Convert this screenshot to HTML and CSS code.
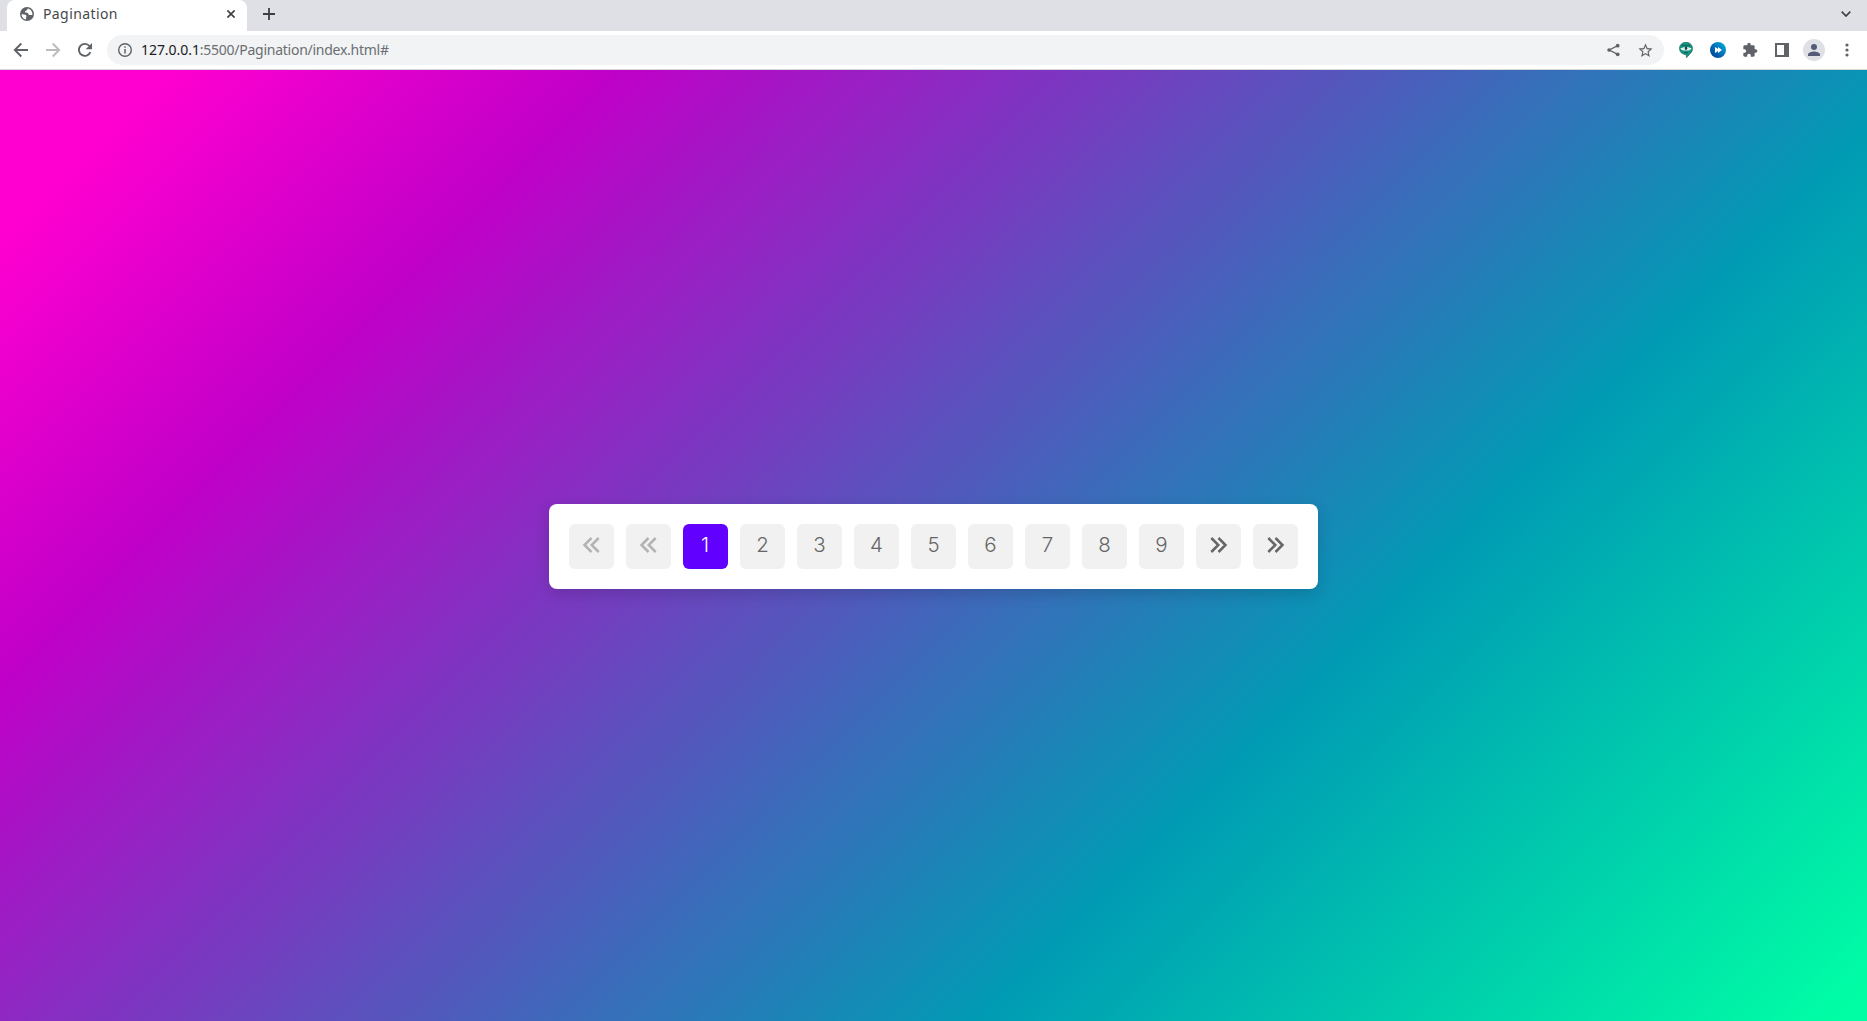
FILE: index.html
```html
<!DOCTYPE html>
<html lang="en">
<head>
<meta charset="utf-8">
<title>Pagination</title>
<link rel="stylesheet" href="styles.css">
</head>
<body>
<header class="tabstrip">
  <div class="tab">
    <svg class="globe" viewBox="0 0 16 16"><circle cx="8" cy="8" r="8" fill="#5f6368"/><path d="M1.800 8.300c2 .1 3.900.1 5.200 1.100.8.7.4 1.900-.3 2.600l.4 2.200C4 14 1.700 11.500 1.800 8.300zM8.500 1.800c.3 1.300-.3 2-1.500 2.300-1.100.3-.8 1.300-1.600 1.700.9 1.300 2.700.5 3.700 1.300.9.700.4 1.700 1.400 2 1.100.4 2.400-.2 3.700.1.300-4-2.200-7-5.700-7.400z" fill="#fff"/></svg>
    <span class="tab-title">Pagination</span>
    <svg class="close" viewBox="0 0 8 8"><path d="M.4.4l7.200 7.200M7.600.4L.4 7.600" stroke="#3c4043" stroke-width="1.600"/></svg>
  </div>
  <svg class="plus" viewBox="0 0 12 12"><path d="M6 0v12M0 6h12" stroke="#3c4043" stroke-width="1.800"/></svg>
  <svg class="chevron" viewBox="0 0 10 6"><path d="M.7.700L5 5 9.300.700" fill="none" stroke="#3c4043" stroke-width="1.700"/></svg>
</header>
<nav class="toolbar">
  <svg class="ico back" viewBox="0 0 16 16"><path d="M15 8H2M8.300 1.500L1.800 8l6.500 6.500" fill="none" stroke="#5f6368" stroke-width="1.900"/></svg>
  <svg class="ico forward" viewBox="0 0 16 16"><path d="M1 8h13M7.700 1.500L14.200 8l-6.500 6.500" fill="none" stroke="#babcbe" stroke-width="1.900"/></svg>
  <svg class="ico reload" viewBox="0 0 16 16"><path d="M13.400 10.200A6 6 0 1 1 12.500 4" fill="none" stroke="#5f6368" stroke-width="1.900"/><path d="M15 1v6.300H8.700z" fill="#5f6368"/></svg>
  <div class="address">
    <svg class="info" viewBox="0 0 14 14"><circle cx="7" cy="7" r="6.300" fill="none" stroke="#5f6368" stroke-width="1.400"/><path d="M7 6v4.500M7 3.300v1.500" stroke="#5f6368" stroke-width="1.500"/></svg>
    <span class="url"><b>127.0.0.1</b>:5500/Pagination/index.html#</span>
    <svg class="share" viewBox="0 0 14 14"><path d="M11.500 2.300L2.500 7l9 4.700" fill="none" stroke="#5f6368" stroke-width="1.300"/><g fill="#5f6368"><circle cx="11.500" cy="2.300" r="2"/><circle cx="2.300" cy="7" r="2"/><circle cx="11.500" cy="11.700" r="2"/></g></svg>
    <svg class="star" viewBox="0 0 24 24"><path fill="#5f6368" d="M22 9.240l-7.190-.62L12 2 9.190 8.630 2 9.240l5.460 4.730L5.820 21 12 17.270 18.180 21l-1.630-7.030L22 9.240zM12 15.400l-3.760 2.270 1-4.280-3.320-2.880 4.380-.38L12 6.100l1.710 4.040 4.380.38-3.320 2.880 1 4.280L12 15.400z"/></svg>
  </div>
  <div class="tools">
    <svg class="ext-pin" viewBox="0 0 14 16"><path d="M7 .3c3.700 0 6.500 2.700 6.500 6.200 0 2.300-.8 4-2.500 5.300L7.500 15.700l-.3-3C3 12.500.500 9.800.500 6.500.500 3 3.300.3 7 .3z" fill="#139484" stroke="#17604f" stroke-width=".6"/><path d="M1.500 6c1.500.1 2-.6 3.200-.8h4.600c1.200.2 1.700.9 3.200.8-.2 1.500-1.500 2.300-3.200 2.400H4.700C3 8.300 1.700 7.500 1.500 6z" fill="#e0f2ee"/><ellipse cx="7" cy="6.300" rx="1.200" ry="1.700" fill="#12463f"/><path d="M3 3.800C5 2.800 6 3.300 7 4.300c1-1 2-1.500 4-.5M5 10.600h4" fill="none" stroke="#12463f" stroke-width=".8"/></svg>
    <svg class="ext-skip" viewBox="0 0 16 16"><defs><linearGradient id="skip" x1="1" y1="0" x2="0" y2="1"><stop stop-color="#00b8e0"/><stop offset=".55" stop-color="#0568b7"/><stop offset="1" stop-color="#053b87"/></linearGradient></defs><circle cx="8" cy="8" r="8" fill="url(#skip)"/><path d="M5 5l3 2V5l4 3-4 3V9l-3 2z" fill="#fff"/></svg>
    <svg class="puzzle" viewBox="0 0 24 24"><path fill="#5f6368" d="M20.500 11H19V7c0-1.100-.9-2-2-2h-4V3.500C13 2.120 11.880 1 10.500 1S8 2.120 8 3.500V5H4c-1.100 0-1.990.9-1.990 2v3.800H3.500c1.490 0 2.700 1.210 2.700 2.700s-1.210 2.700-2.700 2.700H2V20c0 1.100.9 2 2 2h3.800v-1.500c0-1.490 1.210-2.700 2.700-2.700 1.490 0 2.700 1.210 2.700 2.700V22H17c1.100 0 2-.9 2-2v-4h1.500c1.380 0 2.500-1.120 2.500-2.500S21.880 11 20.500 11z"/></svg>
    <svg class="panel" viewBox="0 0 14 14"><path d="M0 0h14v14H0zM2 2v10h7V2z" fill="#5f6368" fill-rule="evenodd"/></svg>
    <span class="avatar"><svg viewBox="0 0 12 12"><circle cx="6" cy="3" r="3" fill="#535b78"/><path d="M0 12v-1.500C0 8.500 4 7.500 6 7.500s6 1 6 3V12z" fill="#535b78"/></svg></span>
    <svg class="dots" viewBox="0 0 4 14"><g fill="#5f6368"><circle cx="2" cy="2" r="1.600"/><circle cx="2" cy="7" r="1.600"/><circle cx="2" cy="12" r="1.600"/></g></svg>
  </div>
</nav>
<main class="page">
  <ul class="pagination">
    <li class="item disabled"><svg viewBox="0 0 18 16"><path d="M9.500 1L2.500 8l7 7M16.700 1l-7 7 7 7"/></svg></li>
    <li class="item disabled"><svg viewBox="0 0 18 16"><path d="M9.500 1L2.500 8l7 7M16.700 1l-7 7 7 7"/></svg></li>
    <li class="item active">1</li>
    <li class="item">2</li>
    <li class="item">3</li>
    <li class="item">4</li>
    <li class="item">5</li>
    <li class="item">6</li>
    <li class="item">7</li>
    <li class="item">8</li>
    <li class="item">9</li>
    <li class="item next"><svg viewBox="0 0 18 16"><path d="M1.300 1l7 7-7 7M8.500 1l7 7-7 7"/></svg></li>
    <li class="item next"><svg viewBox="0 0 18 16"><path d="M1.300 1l7 7-7 7M8.500 1l7 7-7 7"/></svg></li>
  </ul>
</main>
</body>
</html>
```
FILE: styles.css
```css
* { box-sizing: border-box; }
body {
  margin: 0;
  height: 100vh;
  overflow: hidden;
  display: flex;
  flex-direction: column;
  font-family: "Noto Sans", sans-serif;
}
svg { display: block; flex: none; }
.tabstrip {
  height: 31px;
  flex: none;
  background: #dee0e6;
  display: flex;
  align-items: center;
  padding: 0 16px 3px 7px;
}
.tab {
  width: 240px;
  height: 31px;
  margin-bottom: -3px;
  padding: 0 12px 3px 13px;
  background: #fff;
  border-radius: 8px 8px 0 0;
  display: flex;
  align-items: center;
}
.globe { width: 14px; height: 14px; }
.tab-title { margin: -1px 0 0 9px; font-size: 14px; letter-spacing: .4px; color: #45484d; }
.close { width: 8px; height: 8px; margin-left: auto; }
.plus { width: 12px; height: 12px; margin-left: 16px; }
.chevron { width: 10px; height: 6px; margin-left: auto; }
.toolbar {
  height: 39px;
  flex: none;
  background: #fff;
  border-bottom: 1px solid #d5d7db;
  display: flex;
  align-items: center;
  padding: 0 18px 0 13px;
}
.ico { width: 16px; height: 16px; }
.forward, .reload { margin-left: 16px; }
.address {
  flex: 1;
  height: 30px;
  margin-left: 14px;
  border-radius: 15px;
  background: #f1f3f4;
  display: flex;
  align-items: center;
  padding: 0 10px 0 11px;
}
.info { width: 14px; height: 14px; }
.url { margin: -2px 0 0 9px; font-size: 14px; letter-spacing: -.26px; color: #6b6e72; }
.url b { font-weight: 400; letter-spacing: -.05px; color: #202124; }
.share { width: 13px; height: 14px; margin-left: auto; }
.star { width: 17px; height: 17px; margin-left: 17px; }
.tools { display: flex; align-items: center; }
.ext-pin { width: 14px; height: 16px; margin-left: 15px; }
.ext-skip { width: 16px; height: 16px; margin-left: 17px; }
.puzzle { width: 16px; height: 16px; margin-left: 16px; }
.panel { width: 14px; height: 14px; margin-left: 17px; }
.avatar {
  width: 22px;
  height: 22px;
  margin-left: 14px;
  border-radius: 50%;
  background: #dee0e6;
  display: grid;
  place-items: center;
}
.avatar svg { width: 12px; height: 12px; }
.dots { width: 4px; height: 14px; margin-left: 20px; }
.page {
  flex: 1;
  display: flex;
  align-items: center;
  justify-content: center;
  padding-top: 2px;
  background: linear-gradient(135deg, #ff00d0 6%, #c000c8 21.700%, #009bb4 68.500%, #00ffa5 99%);
}
.pagination {
  margin: 0;
  padding: 20px;
  list-style: none;
  display: flex;
  gap: 12px;
  background: #fff;
  border-radius: 8px;
  box-shadow: 0 5px 15px rgba(0, 0, 0, .15);
}
.item {
  width: 45px;
  height: 45px;
  border-radius: 6px;
  background: #f1f1f1;
  color: #666;
  display: grid;
  place-items: center;
  font: 350 20.5px/42px "Inter", sans-serif;
  padding-bottom: 3px;
}
.item svg { width: 18px; height: 16px; margin-right: 1px; }
.item.next svg { margin: 0 0 0 1px; }
.item path { fill: none; stroke: #666; stroke-width: 2.500; }
.item.disabled path { stroke: #b3b3b3; }
.item.active { background: #6200ff; color: #fff; padding-right: 1px; }
```
